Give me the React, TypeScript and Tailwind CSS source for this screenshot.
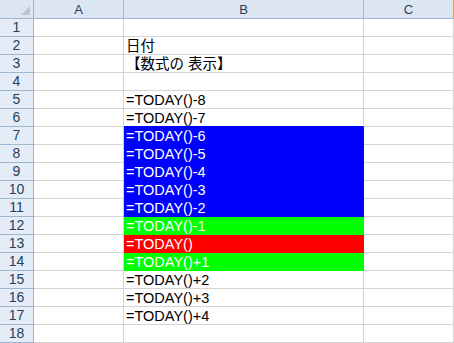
import React from "react";

type Row = { n: number; text?: string; fill?: string };

const BLUE = "#0000ff";
const GREEN = "#00ff00";
const RED = "#ff0000";

const rows: Row[] = [
  { n: 1 },
  { n: 2, text: "日付" },
  { n: 3, text: "【数式の 表示】" },
  { n: 4 },
  { n: 5, text: "=TODAY()-8" },
  { n: 6, text: "=TODAY()-7" },
  { n: 7, text: "=TODAY()-6", fill: BLUE },
  { n: 8, text: "=TODAY()-5", fill: BLUE },
  { n: 9, text: "=TODAY()-4", fill: BLUE },
  { n: 10, text: "=TODAY()-3", fill: BLUE },
  { n: 11, text: "=TODAY()-2", fill: BLUE },
  { n: 12, text: "=TODAY()-1", fill: GREEN },
  { n: 13, text: "=TODAY()", fill: RED },
  { n: 14, text: "=TODAY()+1", fill: GREEN },
  { n: 15, text: "=TODAY()+2" },
  { n: 16, text: "=TODAY()+3" },
  { n: 17, text: "=TODAY()+4" },
  { n: 18 },
];

const GRID = "#d4d4d4";
const font = { fontFamily: '"Liberation Sans", "Noto Sans CJK JP", sans-serif' };

export default function App() {
  return (
    <div className="w-[454px] h-[343px] bg-white overflow-hidden" style={font}>
      {/* header */}
      <div className="flex h-[19px] bg-[#dce6f2] border-b border-[#9eb6ce]">
        <div className="relative w-[34px] h-full border-r border-[#9eb6ce]">
          <div className="absolute right-[3px] bottom-[3px] w-0 h-0 border-l-[9px] border-l-transparent border-b-[9px] border-b-[#b8c5d6]" />
        </div>
        <div className="w-[90px] h-full border-r border-[#9eb6ce] flex items-center justify-center text-[13px] text-[#27415f] leading-none pt-[1px]">
          A
        </div>
        <div className="w-[240px] h-full border-r border-[#9eb6ce] flex items-center justify-center text-[13px] text-[#27415f] leading-none pt-[1px]">
          B
        </div>
        <div className="w-[90px] h-full border-r border-[#d9a35a] flex items-center justify-center text-[13px] text-[#27415f] leading-none pt-[1px]">
          C
        </div>
      </div>
      {rows.map((r, i) => {
        const next = rows[i + 1];
        const bColor = r.fill ? r.fill : next && next.fill ? next.fill : GRID;
        const rColor = r.fill ? r.fill : GRID;
        return (
          <div key={r.n} className="flex h-[18px]">
            <div className="w-[34px] h-full bg-[#e4ecf7] border-r border-b border-r-[#9eb6ce] border-b-[#9eb6ce] flex items-end justify-center text-[14px] leading-none text-[#27415f] pb-[2px]">
              {r.n}
            </div>
            <div
              className="w-[90px] h-full border-r border-b"
              style={{ borderRightColor: GRID, borderBottomColor: GRID }}
            />
            <div
              className="w-[240px] h-full border-r border-b flex items-end pl-[2px] pb-[1px] text-[14.5px] leading-none whitespace-nowrap"
              style={{
                backgroundColor: r.fill || "#ffffff",
                color: r.fill ? "#ffffff" : "#000000",
                borderRightColor: rColor,
                borderBottomColor: bColor,
              }}
            >
              {r.text}
            </div>
            <div
              className="w-[90px] h-full border-r border-b"
              style={{ borderRightColor: GRID, borderBottomColor: GRID }}
            />
          </div>
        );
      })}
    </div>
  );
}
